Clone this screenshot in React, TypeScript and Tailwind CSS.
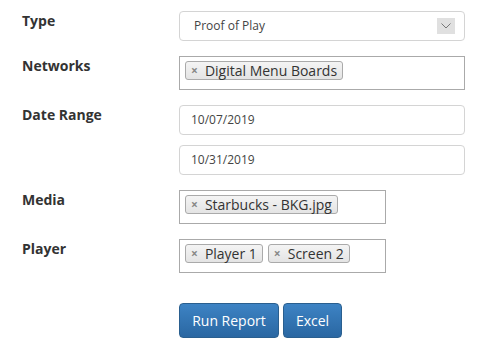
import React from "react";

const Tag = ({ label }: { label: string }) => (
  <span className="flex h-[19px] items-center rounded-[3px] border border-[#aaa] bg-gradient-to-b from-[#f4f4f4] to-[#e4e4e4] pl-[5px] pr-[5px] text-[14px] leading-none text-[#333]">
    <span className="mr-[7px] text-[12px] font-bold text-[#888]">×</span>
    {label}
  </span>
);

const Label = ({ text }: { text: string }) => (
  <div className="w-[157px] shrink-0 text-[14px] font-bold leading-[20px] text-[#333]">{text}</div>
);

export default function App() {
  return (
    <div
      className="flex h-[363px] w-[488px] flex-col bg-white pl-[22px] pt-[11px]"
      style={{ fontFamily: '"Open Sans", "Liberation Sans", sans-serif' }}
    >
      <div className="flex">
        <Label text="Type" />
        <div className="flex h-[30px] w-[286px] items-center justify-between rounded-[4px] border border-[#d4d4d4] pl-[14px] pr-[9px] text-[12px] text-[#444]">
          <span>Proof of Play</span>
          <span className="flex h-[16px] w-[18px] items-center justify-center bg-[#e0e0e0]">
            <svg width="10" height="6" viewBox="0 0 10 6">
              <path d="M0.5 0.5 L5 5 L9.5 0.5" fill="none" stroke="#777" strokeWidth="1" />
            </svg>
          </span>
        </div>
      </div>

      <div className="mt-[15px] flex">
        <Label text="Networks" />
        <div className="flex h-[34px] w-[286px] items-start border border-[#aaa] pl-[5px] pt-[4px]">
          <Tag label="Digital Menu Boards" />
        </div>
      </div>

      <div className="mt-[15px] flex">
        <Label text="Date Range" />
        <div className="flex flex-col gap-[10px]">
          <div className="flex h-[30px] w-[286px] items-center rounded-[4px] border border-[#d4d4d4] pl-[11px] text-[12px] text-[#444]">
            10/07/2019
          </div>
          <div className="flex h-[30px] w-[286px] items-center rounded-[4px] border border-[#d4d4d4] pl-[11px] text-[12px] text-[#444]">
            10/31/2019
          </div>
        </div>
      </div>

      <div className="mt-[15px] flex">
        <Label text="Media" />
        <div className="flex h-[34px] w-[207px] items-start border border-[#aaa] pl-[5px] pt-[4px]">
          <Tag label="Starbucks - BKG.jpg" />
        </div>
      </div>

      <div className="mt-[15px] flex">
        <Label text="Player" />
        <div className="flex h-[34px] w-[207px] items-start gap-[5px] border border-[#aaa] pl-[5px] pt-[4px]">
          <Tag label="Player 1" />
          <Tag label="Screen 2" />
        </div>
      </div>

      <div className="mt-[30px] flex gap-[4px] pl-[157px]">
        <button className="h-[35px] w-[100px] rounded-[4px] border border-[#2a5f8f] bg-gradient-to-b from-[#3d83c4] to-[#2a67a2] text-[14px] text-white">
          Run Report
        </button>
        <button className="h-[35px] w-[59px] rounded-[4px] border border-[#2a5f8f] bg-gradient-to-b from-[#3d83c4] to-[#2a67a2] text-[14px] text-white">
          Excel
        </button>
      </div>
    </div>
  );
}
